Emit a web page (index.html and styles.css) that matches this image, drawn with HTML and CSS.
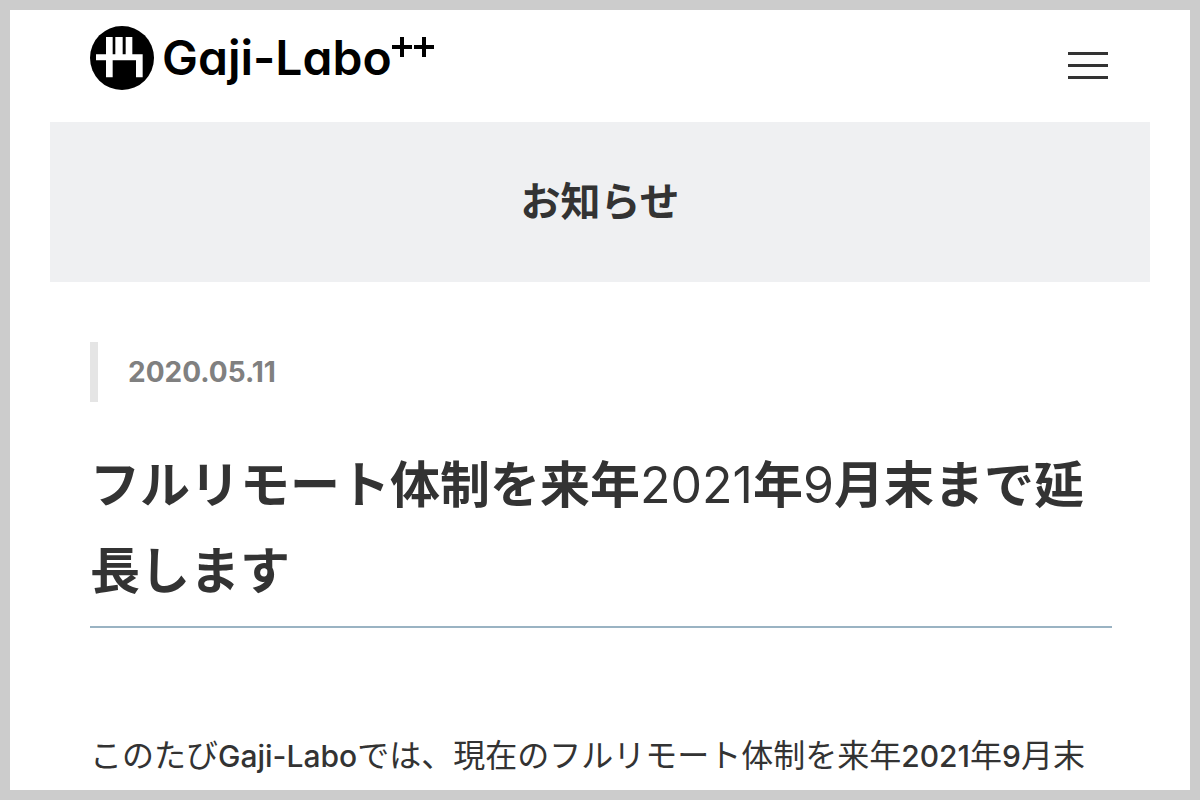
FILE: index.html
```html
<!DOCTYPE html>
<html lang="ja">
<head>
<meta charset="utf-8">
<meta name="viewport" content="width=device-width, initial-scale=1">
<title>お知らせ | Gaji-Labo</title>
<link rel="stylesheet" href="styles.css">
</head>
<body class="page">
<header class="header">
  <a class="logo" href="#" aria-label="Gaji-Labo++">
    <svg class="logo-mark" viewBox="0 0 192 192" aria-hidden="true">
      <circle cx="96" cy="96" r="96"/>
      <path fill="#fff" d="M48 33H68V85H76V33H98V85H107V33H127V85H158V154H138V103H68V154H48V103H18V85H48Z"/>
    </svg>
    <span class="logo-name">Gaji-Labo</span>
    <svg class="logo-plus" viewBox="0 0 42 20" aria-hidden="true">
      <path fill="none" stroke="#000" stroke-width="4" d="M0 10H20M10 0V20M22 10H42M32 0V20"/>
    </svg>
  </a>
  <button class="menu" type="button" aria-label="メニュー">
    <span class="menu-line"></span>
    <span class="menu-line"></span>
    <span class="menu-line"></span>
  </button>
</header>
<main class="main">
  <div class="hero"><p class="hero-title">お知らせ</p></div>
  <article class="article">
    <time class="date" datetime="2020-05-11">2020.05.11</time>
    <h1 class="title">フルリモート体制を来年<span class="number">2021</span>年<span class="number">9</span>月末まで延長します</h1>
    <p class="text">このたび<span class="latin">Gaji-Labo</span>では、現在のフルリモート体制を来年<span class="latin">2021</span>年<span class="latin">9</span>月末</p>
  </article>
</main>
</body>
</html>
```
FILE: styles.css
```css
* {
  box-sizing: border-box;
}

.page {
  margin: 0;
  height: 100vh;
  overflow: hidden;
  border: 10px solid #ccc;
  background: #fff;
  color: #333;
  font-family: Inter, "Noto Sans CJK JP", sans-serif;
}

.header {
  display: flex;
  justify-content: space-between;
  align-items: flex-start;
  height: 112px;
  padding: 16px 82px 0 80px;
}

.logo {
  display: flex;
  align-items: flex-start;
  color: #000;
  text-decoration: none;
}

.logo-mark {
  width: 64px;
  height: 64px;
  margin-right: 8px;
}

.logo-name {
  font-size: 48px;
  font-weight: 600;
  line-height: 64px;
  font-feature-settings: "cv11";
}

.logo-plus {
  width: 42px;
  height: 20px;
  margin-top: 11px;
}

.menu {
  display: flex;
  flex-direction: column;
  gap: 9px;
  margin-top: 26px;
  padding: 0;
  border: 0;
  background: none;
}

.menu-line {
  width: 40px;
  height: 3px;
  background: #333;
}

.main {
  padding: 0 40px;
}

.hero {
  padding: 50px 0;
  background: #eff0f2;
  text-align: center;
}

.hero-title {
  margin: 0;
  font-size: 40px;
  font-weight: 700;
  line-height: 60px;
}

.article {
  padding: 60px 38px 0 40px;
}

.date {
  display: block;
  padding-left: 30px;
  border-left: 8px solid #e5e5e5;
  color: #808080;
  font-size: 28px;
  font-weight: 700;
  line-height: 60px;
}

.title {
  margin: 40px 0 0;
  padding-bottom: 12px;
  border-bottom: 2px solid #9ab3c3;
  font-size: 50px;
  font-weight: 700;
  line-height: 86px;
}

.number {
  font-weight: 400;
  line-height: 1;
}

.text {
  margin: 100px 0 0;
  font-size: 32px;
  line-height: 56px;
}

.latin {
  font-size: 30px;
  font-weight: 500;
  line-height: 1;
}
```
